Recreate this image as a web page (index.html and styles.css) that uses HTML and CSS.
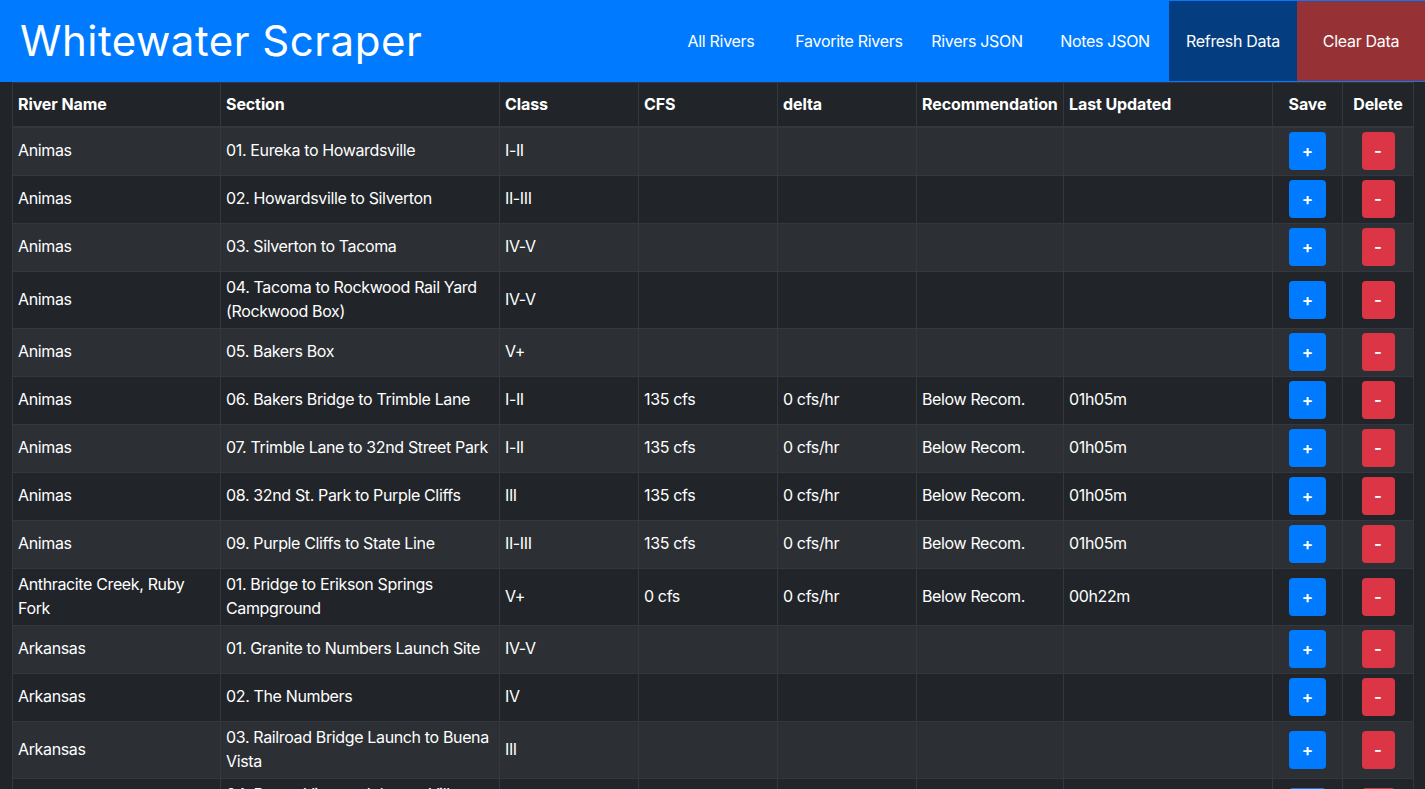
FILE: index.html
```html
<!DOCTYPE html>
<html lang="en">
<head>
<meta charset="utf-8">
<title>Whitewater Scraper</title>
<link rel="stylesheet" href="styles.css">
</head>
<body>
<header class="navbar">
  <h1 class="brand">Whitewater Scraper</h1>
  <nav class="nav">
    <a class="nav-link" href="#">All Rivers</a>
    <a class="nav-link" href="#">Favorite Rivers</a>
    <a class="nav-link" href="#">Rivers JSON</a>
    <a class="nav-link" href="#">Notes JSON</a>
    <a class="nav-link nav-refresh" href="#">Refresh Data</a>
    <a class="nav-link nav-clear" href="#">Clear Data</a>
  </nav>
</header>
<main class="container">
  <table class="rivers">
    <colgroup>
      <col class="c-name"><col class="c-section"><col class="c-class"><col class="c-cfs"><col class="c-delta"><col class="c-rec"><col class="c-upd"><col class="c-save"><col class="c-del">
    </colgroup>
    <thead>
      <tr><th>River Name</th><th>Section</th><th>Class</th><th>CFS</th><th>delta</th><th>Recommendation</th><th>Last Updated</th><th class="center">Save</th><th class="center">Delete</th></tr>
    </thead>
    <tbody>
      <tr><td>Animas</td><td>01. Eureka to Howardsville</td><td>I-II</td><td></td><td></td><td></td><td></td><td class="center"><button class="btn btn-save">+</button></td><td class="center"><button class="btn btn-del">-</button></td></tr>
      <tr><td>Animas</td><td>02. Howardsville to Silverton</td><td>II-III</td><td></td><td></td><td></td><td></td><td class="center"><button class="btn btn-save">+</button></td><td class="center"><button class="btn btn-del">-</button></td></tr>
      <tr><td>Animas</td><td>03. Silverton to Tacoma</td><td>IV-V</td><td></td><td></td><td></td><td></td><td class="center"><button class="btn btn-save">+</button></td><td class="center"><button class="btn btn-del">-</button></td></tr>
      <tr><td>Animas</td><td>04. Tacoma to Rockwood Rail Yard (Rockwood Box)</td><td>IV-V</td><td></td><td></td><td></td><td></td><td class="center"><button class="btn btn-save">+</button></td><td class="center"><button class="btn btn-del">-</button></td></tr>
      <tr><td>Animas</td><td>05. Bakers Box</td><td>V+</td><td></td><td></td><td></td><td></td><td class="center"><button class="btn btn-save">+</button></td><td class="center"><button class="btn btn-del">-</button></td></tr>
      <tr><td>Animas</td><td>06. Bakers Bridge to Trimble Lane</td><td>I-II</td><td>135 cfs</td><td>0 cfs/hr</td><td>Below Recom.</td><td>01h05m</td><td class="center"><button class="btn btn-save">+</button></td><td class="center"><button class="btn btn-del">-</button></td></tr>
      <tr><td>Animas</td><td>07. Trimble Lane to 32nd Street Park</td><td>I-II</td><td>135 cfs</td><td>0 cfs/hr</td><td>Below Recom.</td><td>01h05m</td><td class="center"><button class="btn btn-save">+</button></td><td class="center"><button class="btn btn-del">-</button></td></tr>
      <tr><td>Animas</td><td>08. 32nd St. Park to Purple Cliffs</td><td>III</td><td>135 cfs</td><td>0 cfs/hr</td><td>Below Recom.</td><td>01h05m</td><td class="center"><button class="btn btn-save">+</button></td><td class="center"><button class="btn btn-del">-</button></td></tr>
      <tr><td>Animas</td><td>09. Purple Cliffs to State Line</td><td>II-III</td><td>135 cfs</td><td>0 cfs/hr</td><td>Below Recom.</td><td>01h05m</td><td class="center"><button class="btn btn-save">+</button></td><td class="center"><button class="btn btn-del">-</button></td></tr>
      <tr><td>Anthracite Creek, Ruby Fork</td><td>01. Bridge to Erikson Springs Campground</td><td>V+</td><td>0 cfs</td><td>0 cfs/hr</td><td>Below Recom.</td><td>00h22m</td><td class="center"><button class="btn btn-save">+</button></td><td class="center"><button class="btn btn-del">-</button></td></tr>
      <tr><td>Arkansas</td><td>01. Granite to Numbers Launch Site</td><td>IV-V</td><td></td><td></td><td></td><td></td><td class="center"><button class="btn btn-save">+</button></td><td class="center"><button class="btn btn-del">-</button></td></tr>
      <tr><td>Arkansas</td><td>02. The Numbers</td><td>IV</td><td></td><td></td><td></td><td></td><td class="center"><button class="btn btn-save">+</button></td><td class="center"><button class="btn btn-del">-</button></td></tr>
      <tr><td>Arkansas</td><td>03. Railroad Bridge Launch to Buena Vista</td><td>III</td><td></td><td></td><td></td><td></td><td class="center"><button class="btn btn-save">+</button></td><td class="center"><button class="btn btn-del">-</button></td></tr>
      <tr><td>Arkansas</td><td>04. Buena Vista to Johnson Village (Fractions)</td><td>II</td><td></td><td></td><td></td><td></td><td class="center"><button class="btn btn-save">+</button></td><td class="center"><button class="btn btn-del">-</button></td></tr>
    </tbody>
  </table>
</main>
</body>
</html>
```

FILE: styles.css
```css
* { box-sizing: border-box; }
html, body { margin: 0; padding: 0; }
body {
  background: #212529;
  color: #fff;
  font-family: Inter, "Noto Sans", sans-serif;
  font-size: 16px;
  line-height: 24px;
}
.navbar {
  display: flex;
  align-items: stretch;
  justify-content: space-between;
  height: 82px;
  background: #007bff;
  padding: 1px 0;
}
.brand {
  margin: 0;
  padding-left: 20px;
  align-self: center;
  font-size: 42px;
  font-weight: 400;
  line-height: 48px;
  color: #fff;
  letter-spacing: 0.5px;
}
.nav { display: flex; }
.nav-link {
  width: 128px;
  display: flex;
  align-items: center;
  justify-content: center;
  color: #fff;
  text-decoration: none;
  font-size: 16px;
  letter-spacing: -0.3px;
  padding-bottom: 1px;
}
.nav-refresh { background: #043e80; }
.nav-clear { background: #963235; }
.container { padding: 0 12px; }
.rivers {
  width: 100%;
  table-layout: fixed;
  border-collapse: collapse;
  background: #212529;
  letter-spacing: -0.36px;
}
.c-name { width: 208px; }
.c-section { width: 279px; }
.c-class { width: 139px; }
.c-cfs { width: 139px; }
.c-delta { width: 139px; }
.c-rec { width: 147px; }
.c-upd { width: 209px; }
.c-save { width: 70px; }
.c-del { width: 71px; }
.rivers th, .rivers td {
  border: 1px solid #32383e;
  padding: 4.5px 5px;
  text-align: left;
  vertical-align: middle;
  line-height: 23.5px;
}
.rivers th {
  font-weight: 700;
  letter-spacing: -0.1px;
  padding-top: 9.5px;
  padding-bottom: 9.5px;
  border-bottom-width: 2px;
}
.rivers tbody tr:nth-child(odd) { background: #2c3034; }
.rivers .center { text-align: center; }
.btn {
  display: inline-block;
  height: 38px;
  border: 1px solid transparent;
  border-radius: 4px;
  color: #fff;
  font-family: inherit;
  font-size: 17px;
  font-weight: 600;
  line-height: 24px;
  padding: 6px 0;
  vertical-align: middle;
}
.btn-save { width: 37px; background: #007bff; }
.btn-del { width: 33px; background: #dc3545; }
```
